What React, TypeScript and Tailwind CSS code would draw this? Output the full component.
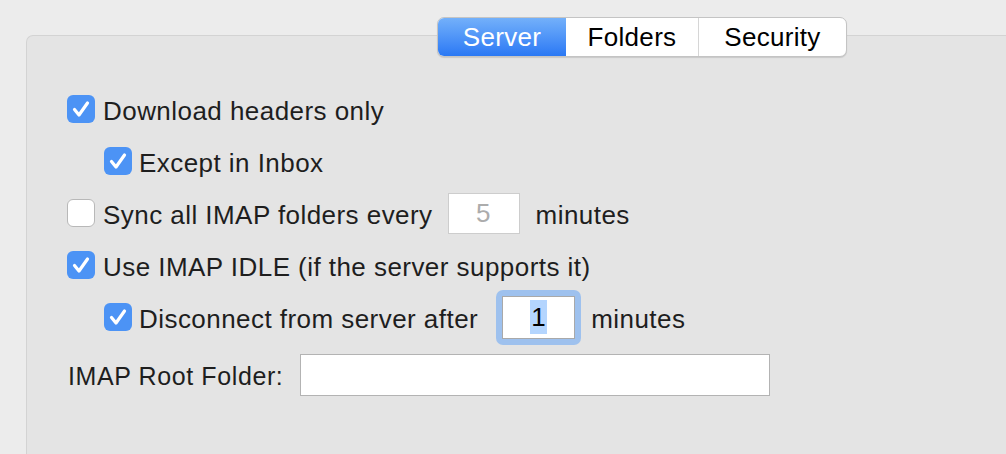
import React from "react";

const Check = ({ checked }: { checked: boolean }) =>
  checked ? (
    <div className="w-[28px] h-[28px] rounded-[6px] bg-[#4c93f5] flex items-center justify-center shrink-0">
      <svg width="28" height="28" viewBox="0 0 28 28">
        <polyline points="7.5,14.5 12,20 20.5,8" fill="none" stroke="white" strokeWidth="3.2" strokeLinecap="round" strokeLinejoin="round" />
      </svg>
    </div>
  ) : (
    <div className="w-[28px] h-[28px] rounded-[6px] bg-white border border-[#b8b8b8] shrink-0" />
  );

export default function App() {
  return (
    <div
      className="w-[1006px] h-[454px] bg-[#ececec] overflow-hidden pt-[17px] text-[#1e1e1e]"
      style={{ fontFamily: '"Liberation Sans", Arial, sans-serif' }}
    >
      <div className="relative z-10 ml-[437px] flex w-[410px] h-[40px] rounded-[7px] border border-[#c4c4c4] shadow-[0_1px_1px_rgba(0,0,0,0.12)] overflow-hidden text-[26px] tracking-[0.3px] leading-none bg-white">
        <div className="w-[128px] flex items-center justify-center text-white bg-gradient-to-b from-[#73b0fa] to-[#2a78f4]">
          Server
        </div>
        <div className="w-[133px] flex items-center justify-center text-black border-r border-[#d6d6d6]">
          Folders
        </div>
        <div className="flex-1 flex items-center justify-center text-black">Security</div>
      </div>
      <div className="-mt-[22px] ml-[26px] h-[460px] bg-[#e4e4e4] border-t border-l border-[#d3d3d3] rounded-tl-[7px] pt-[47px] text-[26px] tracking-[0.45px]">
        <div className="h-[52px] flex items-center pl-[40px] gap-[8px]">
          <Check checked />
          <span className="pt-[4px]">Download headers only</span>
        </div>
        <div className="h-[52px] flex items-center pl-[77px] gap-[7px]">
          <Check checked />
          <span className="pt-[4px]">Except in Inbox</span>
        </div>
        <div className="h-[52px] flex items-center pl-[40px] gap-[8px]">
          <Check checked={false} />
          <span className="pt-[4px]">Sync all IMAP folders every</span>
          <div className="ml-[7px] w-[72px] h-[41px] bg-white border border-[#cdcdcd] flex items-center justify-center text-[#acacac]">
            5
          </div>
          <span className="ml-[8px] pt-[4px]">minutes</span>
        </div>
        <div className="h-[52px] flex items-center pl-[40px] gap-[8px]">
          <Check checked />
          <span className="pt-[4px]">Use IMAP IDLE (if the server supports it)</span>
        </div>
        <div className="h-[52px] flex items-center pl-[77px] gap-[7px]">
          <Check checked />
          <span className="pt-[4px]">Disconnect from server after</span>
          <div className="ml-[11px] w-[85px] h-[55px] rounded-[7px] bg-[#9ec1ee] flex items-center justify-center">
            <div className="w-[73px] h-[43px] bg-white border border-[#a9a9a9] flex items-center justify-center">
              <span className="bg-[#b4d5fe] text-black px-[1px] leading-[34px]">1</span>
            </div>
          </div>
          <span className="ml-[3px] pt-[4px]">minutes</span>
        </div>
        <div className="mt-[11px] h-[42px] flex items-center pl-[41px] text-[25px] tracking-[0.6px]">
          <span className="pt-[3px]">IMAP Root Folder:</span>
          <div className="ml-[17px] w-[470px] h-[42px] bg-white border border-[#b3b3b3]" />
        </div>
      </div>
    </div>
  );
}
